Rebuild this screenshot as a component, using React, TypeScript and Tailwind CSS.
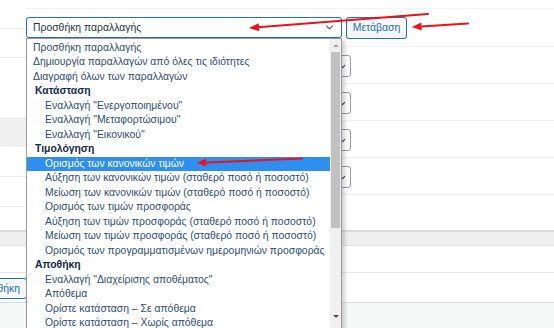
import { ChevronDown } from "lucide-react";

type Opt = { label: string; kind: "item" | "group" | "sub"; active?: boolean };

const options: Opt[] = [
  { label: "Προσθήκη παραλλαγής", kind: "item" },
  { label: "Δημιουργία παραλλαγών από όλες τις ιδιότητες", kind: "item" },
  { label: "Διαγραφή όλων των παραλλαγών", kind: "item" },
  { label: "Κατάσταση", kind: "group" },
  { label: 'Εναλλαγή "Ενεργοποιημένου"', kind: "sub" },
  { label: 'Εναλλαγή "Μεταφορτώσιμου"', kind: "sub" },
  { label: 'Εναλλαγή "Εικονικού"', kind: "sub" },
  { label: "Τιμολόγηση", kind: "group" },
  { label: "Ορισμός των κανονικών τιμών", kind: "sub", active: true },
  { label: "Αύξηση των κανονικών τιμών (σταθερό ποσό ή ποσοστό)", kind: "sub" },
  { label: "Μείωση των κανονικών τιμών (σταθερό ποσό ή ποσοστό)", kind: "sub" },
  { label: "Ορισμός των τιμών προσφοράς", kind: "sub" },
  { label: "Αύξηση των τιμών προσφοράς (σταθερό ποσό ή ποσοστό)", kind: "sub" },
  { label: "Μείωση των τιμών προσφοράς (σταθερό ποσό ή ποσοστό)", kind: "sub" },
  { label: "Ορισμός των προγραμματισμένων ημερομηνιών προσφοράς", kind: "sub" },
  { label: "Αποθήκη", kind: "group" },
  { label: 'Εναλλαγή "Διαχείρισης αποθέματος"', kind: "sub" },
  { label: "Απόθεμα", kind: "sub" },
  { label: "Ορίστε κατάσταση – Σε απόθεμα", kind: "sub" },
  { label: "Ορίστε κατάσταση – Χωρίς απόθεμα", kind: "sub" },
];

function VariationRow() {
  return (
    <div className="h-[37px] border-b border-[#f0f0f0] flex items-start pt-[8px] pl-[205px]">
      <div className="relative w-[120px] h-[22px] rounded-[3px] border border-[#9a9da2] bg-white">
        <ChevronDown className="absolute right-[3px] top-[6px] w-[9px] h-[9px] text-[#3c434a]" strokeWidth={3} />
      </div>
    </div>
  );
}

function Dropdown() {
  return (
    <div className="absolute left-[26px] top-[38px] w-[316px] h-[300px] bg-white border border-[#9a9a9a] shadow-[3px_2px_4px_rgba(0,0,0,0.18)] flex overflow-hidden">
      <ul className="flex-1 min-w-0 overflow-hidden pt-[1.5px] text-[10.4px] leading-[14.5px]">
        {options.map((o, i) => (
          <li
            key={i}
            className={
              o.active
                ? "h-[14.5px] bg-[#2f8ff0] text-white pl-[18px] whitespace-nowrap"
                : o.kind === "group"
                ? "h-[14.5px] font-bold text-[#14284a] pl-[8px] whitespace-nowrap"
                : o.kind === "sub"
                ? "h-[14.5px] text-[#2f4d70] pl-[18px] whitespace-nowrap"
                : "h-[14.5px] text-[#2f4d70] pl-[6px] whitespace-nowrap"
            }
          >
            {o.label}
          </li>
        ))}
      </ul>
      <div className="w-[11px] shrink-0 bg-[#f0f0f0] flex flex-col items-center">
        <div className="h-[13px] flex items-center justify-center">
          <div className="w-0 h-0 border-l-[3px] border-r-[3px] border-b-[3px] border-l-transparent border-r-transparent border-b-[#a3a3a3]" />
        </div>
        <div className="w-[9px] h-[176px] bg-[#c1c1c1]" />
        <div className="flex-1" />
        <div className="h-[13px] mb-[14px] flex items-center justify-center">
          <div className="w-0 h-0 border-l-[3px] border-r-[3px] border-t-[3px] border-l-transparent border-r-transparent border-t-[#505050]" />
        </div>
      </div>
    </div>
  );
}

function Arrows() {
  return (
    <svg className="absolute inset-0 pointer-events-none" width="554" height="328" viewBox="0 0 554 328">
      <g stroke="#e8141b" strokeWidth="2" strokeLinecap="round" fill="#e8141b">
        <line x1="428" y1="14" x2="258" y2="27.3" />
        <polygon points="249,28 259.3,31.2 258.7,23.2" stroke="none" />
        <line x1="468" y1="23.5" x2="421" y2="26.5" />
        <polygon points="412,27 421.7,30.6 421.2,22.6" stroke="none" />
        <line x1="302" y1="158.5" x2="206" y2="162.6" />
        <polygon points="197,163 206.3,166.6 206,158.6" stroke="none" />
      </g>
    </svg>
  );
}

export default function App() {
  return (
    <div
      className="relative w-[554px] h-[328px] overflow-hidden bg-white"
      style={{ fontFamily: '"Liberation Sans", Arial, sans-serif' }}
    >
      <div className="flex h-[230px]">
        {/* left strip */}
        <div className="w-[26px] shrink-0 flex flex-col">
          <div className="h-[29px] border-b border-[#ececec]" />
          <div className="h-[29px] border-b border-[#ececec]" />
          <div className="h-[59px]" />
          <div className="h-[30px] bg-[#f0f0f0]" />
          <div className="h-[30px] border-b border-[#ececec]" />
          <div className="h-[30px] border-b border-[#ececec]" />
        </div>
        {/* main column */}
        <div className="flex-1 flex flex-col">
          <div className="h-[9px] border-b border-[#f2f2f2]" />
          <div className="h-[38px] border-b border-[#f0f0f0] flex items-start pt-[8px] gap-[4px]">
            <div className="w-[316px] h-[21px] rounded-[3px] border border-[#2271b1] bg-white flex items-center justify-between pl-[6px] pr-[6px] text-[10.4px] text-[#2c3338]">
              <span>Προσθήκη παραλλαγής</span>
              <ChevronDown className="w-[11px] h-[11px] text-[#50575e]" strokeWidth={2.5} />
            </div>
            <button className="w-[61px] h-[22px] rounded-[3px] border border-[#2271b1] bg-[#f6f7f7] text-[10.4px] text-[#2271b1]">
              Μετάβαση
            </button>
          </div>
          <VariationRow />
          <VariationRow />
          <VariationRow />
          <VariationRow />
        </div>
      </div>
      <div className="h-[16px] border-t-2 border-[#dcdcde] bg-[#efefef] border-b border-b-[#e4e4e4]" />
      <div className="h-[27px] border-b border-[#e6e6e6]" />
      <div className="h-[30px] border-b border-[#dcdcde] flex items-start pt-[5px]">
        <div className="w-[27px] overflow-hidden flex justify-end">
          <button className="shrink-0 h-[21px] px-[6px] rounded-[3px] border border-[#2271b1] bg-[#f6f7f7] text-[10.4px] text-[#2271b1] whitespace-nowrap">
            Προσθήκη
          </button>
        </div>
      </div>
      <div className="h-[30px] bg-[#f6f7f7]" />
      <Dropdown />
      <Arrows />
    </div>
  );
}
